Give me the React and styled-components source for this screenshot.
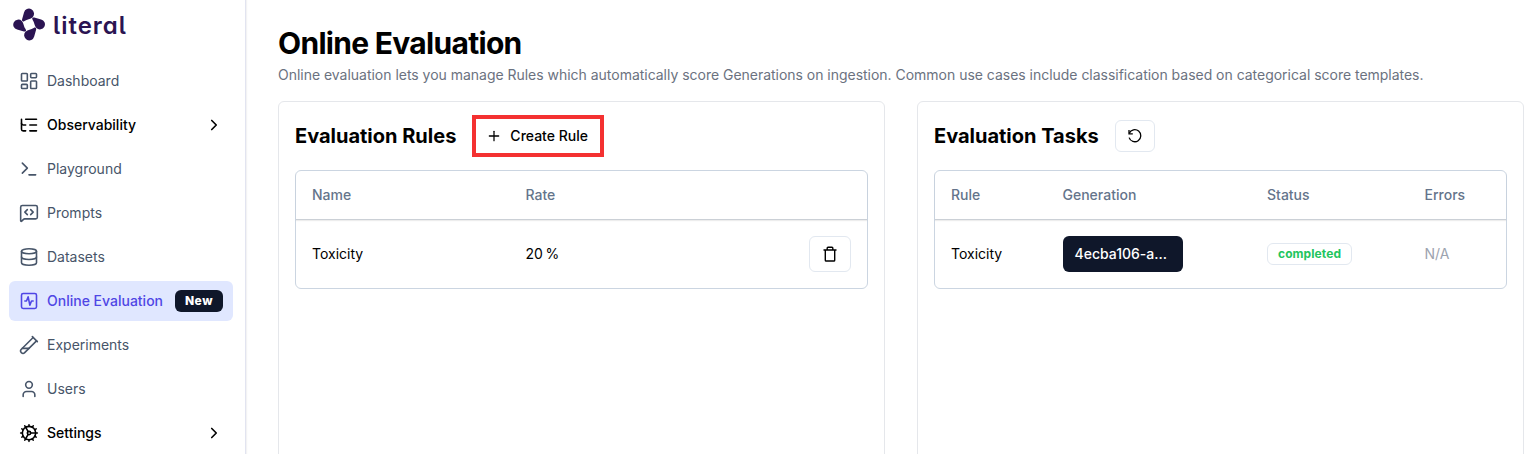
import React from "react";
import styled, { createGlobalStyle, css } from "styled-components";
import {
  LayoutDashboard, ListTree, Terminal, MessageSquareCode, Database, SquareActivity,
  TestTubeDiagonal, User, Cog, ChevronRight, Plus,
} from "lucide-react";

const GlobalStyle = createGlobalStyle`
  *, *::before, *::after { box-sizing: border-box; }
  body {
    margin: 0;
    background: #fff;
    color: #000;
    font-family: Inter, "Liberation Sans", sans-serif;
    font-size: 14px;
    line-height: 20px;
    overflow: hidden;
  }
  h1, h2, p { margin: 0; }
  svg { display: block; flex: none; }
  button { font: inherit; color: inherit; }
`;

const Page = styled.div`
  display: flex;
  height: 454px;
  overflow: hidden;
`;

const Sidebar = styled.aside`
  flex: none;
  width: 246px;
  padding: 8px 12px 0 9px;
  border-right: 1px solid #e2e4f0;
  box-shadow: 1px 0 1px rgba(15, 23, 42, 0.05);
`;

const Logo = styled.div`
  display: flex;
  align-items: center;
  gap: 7px;
  height: 33px;
  padding-left: 4px;
  color: #2b1452;
`;

const Wordmark = styled.span`
  padding-top: 2px;
  font-size: 24px;
  line-height: 32px;
  font-weight: 600;
  letter-spacing: 1px;
  font-feature-settings: "cv05", "cv11";
`;

const Nav = styled.nav`
  display: flex;
  flex-direction: column;
  gap: 4px;
  margin-top: 20px;
`;

const NavItem = styled.a`
  display: flex;
  align-items: center;
  gap: 8px;
  height: 40px;
  padding: 0 10px;
  border-radius: 6px;
  color: #475569;
  ${(p) => p.$group && css`
    color: #000;
    font-weight: 500;
  `}
  ${(p) => p.$active && css`
    color: #4f46e5;
    background: #e0e7ff;
    font-weight: 500;
  `}
`;

const NavLabel = styled.span`
  flex: 1;
  white-space: nowrap;
`;

const NewBadge = styled.span`
  height: 22px;
  padding: 0 10px;
  border-radius: 6px;
  background: #0f172a;
  color: #fff;
  font-size: 12px;
  line-height: 22px;
  font-weight: 800;
  letter-spacing: 0.5px;
`;

const Main = styled.main`
  flex: 1;
  min-width: 0;
  display: flex;
  flex-direction: column;
  padding: 25px 8px 0 32px;
`;

const Title = styled.h1`
  font-size: 30px;
  line-height: 36px;
  font-weight: 700;
  letter-spacing: -0.7px;
`;

const Subtitle = styled.p`
  margin-top: 4px;
  color: #6b7280;
  letter-spacing: -0.022px;
  white-space: nowrap;
`;

const Panels = styled.div`
  flex: 1;
  display: grid;
  grid-template-columns: 1fr 1fr;
  gap: 32px;
  margin-top: 16px;
`;

const Panel = styled.section`
  height: 420px;
  padding: 13px 16px;
  border: 1px solid #e5e7eb;
  border-radius: 6px;
`;

const PanelHeader = styled.header`
  display: flex;
  align-items: center;
  gap: 16px;
  height: 42px;
`;

const PanelTitle = styled.h2`
  font-size: 20px;
  line-height: 28px;
  font-weight: 700;
  white-space: nowrap;
`;

const Highlight = styled.div`
  display: flex;
  width: 132px;
  height: 42px;
  border: 4px solid #f43131;
`;

const CreateButton = styled.button`
  display: flex;
  align-items: center;
  gap: 8px;
  flex: 1;
  padding: 0 0 0 10px;
  border: 0;
  background: #fff;
  font-weight: 500;
  white-space: nowrap;
`;

const IconButton = styled.button`
  display: flex;
  align-items: center;
  justify-content: center;
  width: ${(p) => p.$width}px;
  height: ${(p) => p.$height}px;
  padding: 0;
  border: 1px solid #e2e8f0;
  border-radius: 6px;
  background: #fff;
`;

const Table = styled.div`
  margin-top: 13px;
  height: 119px;
  border: 1px solid #cbd5e1;
  border-radius: 6px;
`;

const Row = styled.div`
  display: grid;
  grid-template-columns: ${(p) => p.$columns};
  align-items: center;
  height: 68px;
  padding: 0 16px;
`;

const HeadRow = styled(Row)`
  height: 49px;
  border-bottom: 1px solid #cbd0d6;
  box-shadow: 0 1px 1px rgba(0, 0, 0, 0.07);
  color: #64748b;
  font-weight: 500;
`;

const Rate = styled.span`
  word-spacing: -1.2px;
`;

const GenerationButton = styled.button`
  width: 120px;
  height: 36px;
  padding: 0 12px;
  border: 0;
  border-radius: 6px;
  background: #0f172a;
  color: #fff;
  font-weight: 500;
  text-align: left;
`;

const StatusBadge = styled.span`
  justify-self: start;
  height: 22px;
  padding: 0 10px;
  border: 1px solid #e2e8f0;
  border-radius: 6px;
  color: #22c55e;
  font-size: 12px;
  line-height: 20px;
  font-weight: 700;
  letter-spacing: 0.08px;
`;

const Muted = styled.span`
  color: #9ca3af;
`;

const RULE_COLUMNS = "213.5px 1fr 42px";
const TASK_COLUMNS = "111.5px 204.5px 157.5px 1fr";

const LogoMark = () => (
  <svg width="33" height="33" viewBox="-16.1 -16.5 33 33" fill="currentColor">
    {[0, 90, 180, 270].map((angle) => (
      <path
        key={angle}
        transform={`rotate(${angle})`}
        d="M-7 -5.2L-5.1 -12A5.1 5.1 0 1 1 3.6 -7.3C1.4 -5.3 -2.1 -5.4 -4.6 -3.6C-6.3 -2.4 -7.5 -3.5 -7 -5.2Z"
      />
    ))}
  </svg>
);

const TrashIcon = () => (
  <svg width="16" height="16" viewBox="0 0 16 16" fill="none" stroke="currentColor" strokeWidth="1.4">
    <path d="M1.5 4h13M3.3 4v10.2q0 .8.8.8h7.8q.8 0 .8-.8V4M5.2 4V2q0-.8.8-.8h4q.8 0 .8.8v2" />
  </svg>
);

const ResetIcon = () => (
  <svg width="16" height="16" viewBox="0 0 16 16" fill="none" stroke="currentColor" strokeWidth="1.3">
    <path d="M2.3 5.3A6 6 0 1 1 2.1 9.6" />
    <path d="M2 2.1v3.8h3.8" />
  </svg>
);

const NAV_ITEMS = [
  { label: "Dashboard", icon: LayoutDashboard },
  { label: "Observability", icon: ListTree, group: true },
  { label: "Playground", icon: Terminal },
  { label: "Prompts", icon: MessageSquareCode },
  { label: "Datasets", icon: Database },
  { label: "Online Evaluation", icon: SquareActivity, active: true },
  { label: "Experiments", icon: TestTubeDiagonal },
  { label: "Users", icon: User },
  { label: "Settings", icon: Cog, group: true },
];

export default function App() {
  return (
    <Page>
      <GlobalStyle />
      <Sidebar>
        <Logo>
          <LogoMark />
          <Wordmark>literal</Wordmark>
        </Logo>
        <Nav>
          {NAV_ITEMS.map(({ label, icon: Icon, group, active }) => (
            <NavItem key={label} $group={group} $active={active}>
              <Icon size={20} strokeWidth={1.9} />
              <NavLabel>{label}</NavLabel>
              {group && <ChevronRight size={18} strokeWidth={2.2} />}
              {active && <NewBadge>New</NewBadge>}
            </NavItem>
          ))}
        </Nav>
      </Sidebar>
      <Main>
        <Title>Online Evaluation</Title>
        <Subtitle>
          Online evaluation lets you manage Rules which automatically score Generations on ingestion. Common use cases include classification based on categorical score templates.
        </Subtitle>
        <Panels>
          <Panel>
            <PanelHeader>
              <PanelTitle>Evaluation Rules</PanelTitle>
              <Highlight>
                <CreateButton>
                  <Plus size={16} strokeWidth={1.9} />
                  Create Rule
                </CreateButton>
              </Highlight>
            </PanelHeader>
            <Table>
              <HeadRow $columns={RULE_COLUMNS}>
                <span>Name</span>
                <span>Rate</span>
              </HeadRow>
              <Row $columns={RULE_COLUMNS}>
                <span>Toxicity</span>
                <Rate>20 %</Rate>
                <IconButton $width={42} $height={36}>
                  <TrashIcon />
                </IconButton>
              </Row>
            </Table>
          </Panel>
          <Panel>
            <PanelHeader>
              <PanelTitle>Evaluation Tasks</PanelTitle>
              <IconButton $width={40} $height={32}>
                <ResetIcon />
              </IconButton>
            </PanelHeader>
            <Table>
              <HeadRow $columns={TASK_COLUMNS}>
                <span>Rule</span>
                <span>Generation</span>
                <span>Status</span>
                <span>Errors</span>
              </HeadRow>
              <Row $columns={TASK_COLUMNS}>
                <span>Toxicity</span>
                <GenerationButton>4ecba106-a...</GenerationButton>
                <StatusBadge>completed</StatusBadge>
                <Muted>N/A</Muted>
              </Row>
            </Table>
          </Panel>
        </Panels>
      </Main>
    </Page>
  );
}
